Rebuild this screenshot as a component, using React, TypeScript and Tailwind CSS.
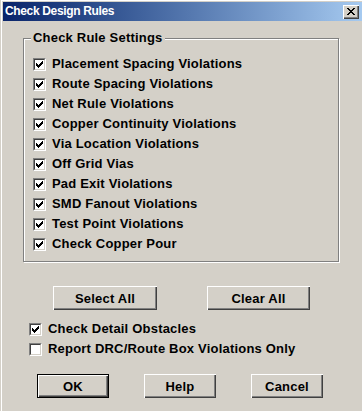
import React from "react";

// ─── Check Design Rules dialog ──────────────────────────────────────
// Classic Win2000-style dialog: title bar, group box of rule checkboxes,
// select/clear buttons, two extra options and OK / Help / Cancel.

const RULES = [
  "Placement Spacing Violations",
  "Route Spacing Violations",
  "Net Rule Violations",
  "Copper Continuity Violations",
  "Via Location Violations",
  "Off Grid Vias",
  "Pad Exit Violations",
  "SMD Fanout Violations",
  "Test Point Violations",
  "Check Copper Pour",
];

// pixel checkmark, 7x7
const CHECK_PIXELS: [number, number][] = [
  [6, 0],
  [5, 1], [6, 1],
  [0, 2], [4, 2], [5, 2], [6, 2],
  [0, 3], [1, 3], [3, 3], [4, 3], [5, 3],
  [0, 4], [1, 4], [2, 4], [3, 4], [4, 4],
  [1, 5], [2, 5], [3, 5],
  [2, 6],
];

function CheckBox({ checked }: { checked: boolean }) {
  return (
    <div className="w-[13px] h-[13px] shrink-0 border border-t-[#808080] border-l-[#808080] border-b-white border-r-white">
      <div className="w-full h-full bg-white border border-t-[#404040] border-l-[#404040] border-b-[#d4d0c8] border-r-[#d4d0c8] p-px">
        {checked && (
          <svg width="7" height="7" viewBox="0 0 7 7" shapeRendering="crispEdges" className="block">
            {CHECK_PIXELS.map(([x, y]) => (
              <rect key={`${x}-${y}`} x={x} y={y} width="1" height="1" fill="#000" />
            ))}
          </svg>
        )}
      </div>
    </div>
  );
}

function Option({ label, checked = true }: { label: string; checked?: boolean }) {
  return (
    <div className="h-[20px] flex items-center gap-[6px]">
      <CheckBox checked={checked} />
      <span className="leading-[20px] whitespace-nowrap">{label}</span>
    </div>
  );
}

function Button({
  label,
  width,
  isDefault = false,
}: {
  label: string;
  width: string;
  isDefault?: boolean;
}) {
  return (
    <div
      className={`${width} h-[24px] flex items-center justify-center bg-[#d4d0c8] shadow-[inset_1px_1px_0_#fff,inset_-1px_-1px_0_#404040,inset_-2px_-2px_0_#808080] ${
        isDefault ? "border border-black" : ""
      }`}
    >
      <span className="leading-none">{label}</span>
    </div>
  );
}

export default function App() {
  return (
    <div className="w-[362px] h-[411px] bg-[#d4d0c8] pl-px overflow-hidden font-['Liberation_Sans',Arial,sans-serif] font-bold text-[13px] tracking-[0.2px] text-black">
      <div className="h-full border-l border-t border-white pl-px pt-px flex flex-col">
        {/* ── Title bar ── */}
        <div className="h-[19px] flex items-center justify-between bg-gradient-to-r from-[#0a246a] to-[#a6caf0] pl-[2px] pr-[3px]">
          <span className="text-white text-[12px] tracking-[-0.35px] leading-[19px]">Check Design Rules</span>
          <div className="w-[16px] h-[14px] bg-[#d4d0c8] flex items-center justify-center shadow-[inset_1px_1px_0_#fff,inset_-1px_-1px_0_#404040,inset_-2px_-2px_0_#808080]">
            <svg width="8" height="7" viewBox="0 0 8 7" shapeRendering="crispEdges" className="block -mt-px">
              <path d="M0 0h2v1h-2zM6 0h2v1h-2zM1 1h2v1h-2zM5 1h2v1h-2zM2 2h4v1h-4zM3 3h2v1h-2zM2 4h4v1h-4zM1 5h2v1h-2zM5 5h2v1h-2zM0 6h2v1h-2zM6 6h2v1h-2z" fill="#000" />
            </svg>
          </div>
        </div>

        {/* ── Check Rule Settings group ── */}
        <div className="relative ml-[20px] mt-[17px] w-[316px] h-[224px] border border-[#808080] shadow-[inset_1px_1px_0_#fff,1px_1px_0_#fff] pl-[9px] pt-[15px]">
          <span className="absolute left-[7px] -top-[11px] px-[2px] leading-[20px] bg-[#d4d0c8]">Check Rule Settings</span>
          {RULES.map((r) => (
            <Option key={r} label={r} />
          ))}
        </div>

        {/* ── Select / Clear ── */}
        <div className="flex mt-[24px] ml-[50px] gap-[50px]">
          <Button label="Select All" width="w-[104px]" />
          <Button label="Clear All" width="w-[103px]" />
        </div>

        {/* ── Extra options ── */}
        <div className="mt-[9px] ml-[26px]">
          <Option label="Check Detail Obstacles" />
          <Option label="Report DRC/Route Box Violations Only" checked={false} />
        </div>

        {/* ── Dialog buttons ── */}
        <div className="flex mt-[15px] ml-[34px] gap-[35px]">
          <Button label="OK" width="w-[72px]" isDefault />
          <Button label="Help" width="w-[72px]" />
          <Button label="Cancel" width="w-[72px]" />
        </div>
      </div>
    </div>
  );
}
